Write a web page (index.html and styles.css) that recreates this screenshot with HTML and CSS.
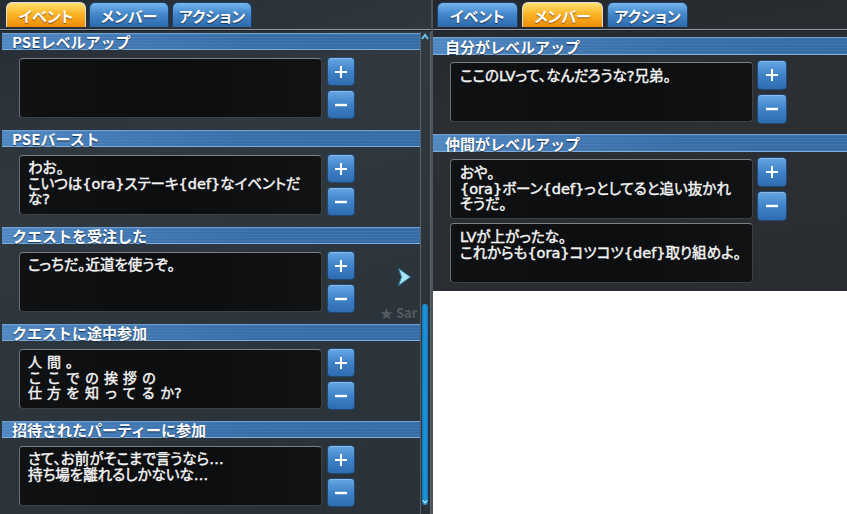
FILE: index.html
```html
<!DOCTYPE html>
<html lang="ja">
<head>
  <meta charset="UTF-8">
  <title>オートワード設定</title>
  <link rel="stylesheet" href="styles.css">
</head>
<body>
  <div class="screen">

    <div class="panel panel-left">
      <div class="tabs">
        <span class="tab tab-on">イベント</span>
        <span class="tab">メンバー</span>
        <span class="tab">アクション</span>
      </div>
      <div class="panel-body">
        <div class="list">
          <section class="entry">
            <h2 class="entry-title">PSEレベルアップ</h2>
            <div class="entry-row">
              <div class="line-box"></div>
              <div class="btns">
                <button class="btn"><svg width="14" height="14" viewBox="0 0 14 14"><path d="M7 1v12M1 7h12" stroke="#fff" stroke-width="2"/></svg></button>
                <button class="btn"><svg width="14" height="14" viewBox="0 0 14 14"><path d="M1 7h12" stroke="#fff" stroke-width="2.4"/></svg></button>
              </div>
            </div>
          </section>

          <section class="entry">
            <h2 class="entry-title">PSEバースト</h2>
            <div class="entry-row">
              <div class="line-box">わお。<br>こいつは{ora}ステーキ{def}なイベントだな?</div>
              <div class="btns">
                <button class="btn"><svg width="14" height="14" viewBox="0 0 14 14"><path d="M7 1v12M1 7h12" stroke="#fff" stroke-width="2"/></svg></button>
                <button class="btn"><svg width="14" height="14" viewBox="0 0 14 14"><path d="M1 7h12" stroke="#fff" stroke-width="2.4"/></svg></button>
              </div>
            </div>
          </section>

          <section class="entry">
            <h2 class="entry-title">クエストを受注した</h2>
            <div class="entry-row">
              <div class="line-box">こっちだ。近道を使うぞ。</div>
              <div class="btns">
                <button class="btn"><svg width="14" height="14" viewBox="0 0 14 14"><path d="M7 1v12M1 7h12" stroke="#fff" stroke-width="2"/></svg></button>
                <button class="btn"><svg width="14" height="14" viewBox="0 0 14 14"><path d="M1 7h12" stroke="#fff" stroke-width="2.4"/></svg></button>
              </div>
            </div>
          </section>

          <section class="entry">
            <h2 class="entry-title">クエストに途中参加</h2>
            <div class="entry-row">
              <div class="line-box line-box-wide">人間。<br>ここでの挨拶の<br>仕方を知ってる<span class="tight">か?</span></div>
              <div class="btns">
                <button class="btn"><svg width="14" height="14" viewBox="0 0 14 14"><path d="M7 1v12M1 7h12" stroke="#fff" stroke-width="2"/></svg></button>
                <button class="btn"><svg width="14" height="14" viewBox="0 0 14 14"><path d="M1 7h12" stroke="#fff" stroke-width="2.4"/></svg></button>
              </div>
            </div>
          </section>

          <section class="entry">
            <h2 class="entry-title">招待されたパーティーに参加</h2>
            <div class="entry-row">
              <div class="line-box">さて、お前がそこまで言うなら…<br>持ち場を離れるしかないな…</div>
              <div class="btns">
                <button class="btn"><svg width="14" height="14" viewBox="0 0 14 14"><path d="M7 1v12M1 7h12" stroke="#fff" stroke-width="2"/></svg></button>
                <button class="btn"><svg width="14" height="14" viewBox="0 0 14 14"><path d="M1 7h12" stroke="#fff" stroke-width="2.4"/></svg></button>
              </div>
            </div>
          </section>
        </div>

        <div class="scroll">
          <svg class="scroll-up" width="8" height="8" viewBox="0 0 8 8"><path d="M1 6L4 2l3 4" fill="none" stroke="#6cc4f0" stroke-width="2"/></svg>
          <div class="scroll-thumb">
            <svg width="7" height="6" viewBox="0 0 7 6"><path d="M1 1l2.5 3L6 1" fill="none" stroke="#bfe6fa" stroke-width="1.4"/></svg>
          </div>
        </div>
      </div>

      <span class="name-tag">★ Sar</span>
      <svg class="cursor" width="15" height="20" viewBox="0 0 15 20"><path d="M1.5 1.5L13.5 10 1.5 18.5 4.5 10z" fill="#a6e4f6" stroke="#2f7fa6" stroke-width="1"/></svg>
    </div>

    <div class="panel panel-right">
      <div class="tabs">
        <span class="tab">イベント</span>
        <span class="tab tab-on">メンバー</span>
        <span class="tab">アクション</span>
      </div>
      <div class="panel-body">
        <div class="list">
          <section class="entry">
            <h2 class="entry-title">自分がレベルアップ</h2>
            <div class="entry-row">
              <div class="boxes">
                <div class="line-box">ここのLVって、なんだろうな?兄弟。</div>
              </div>
              <div class="btns">
                <button class="btn"><svg width="14" height="14" viewBox="0 0 14 14"><path d="M7 1v12M1 7h12" stroke="#fff" stroke-width="2"/></svg></button>
                <button class="btn"><svg width="14" height="14" viewBox="0 0 14 14"><path d="M1 7h12" stroke="#fff" stroke-width="2.4"/></svg></button>
              </div>
            </div>
          </section>

          <section class="entry">
            <h2 class="entry-title">仲間がレベルアップ</h2>
            <div class="entry-row">
              <div class="boxes">
                <div class="line-box">おや。<br>{ora}ボーン{def}っとしてると追い抜かれ<br>そうだ。</div>
                <div class="line-box">LVが上がったな。<br>これからも{ora}コツコツ{def}取り組めよ。</div>
              </div>
              <div class="btns">
                <button class="btn"><svg width="14" height="14" viewBox="0 0 14 14"><path d="M7 1v12M1 7h12" stroke="#fff" stroke-width="2"/></svg></button>
                <button class="btn"><svg width="14" height="14" viewBox="0 0 14 14"><path d="M1 7h12" stroke="#fff" stroke-width="2.4"/></svg></button>
              </div>
            </div>
          </section>
        </div>
      </div>
    </div>

  </div>
</body>
</html>
```

FILE: styles.css
```css
body { margin: 0; background: #fff; font-family: "Noto Sans CJK JP", "Noto Sans", sans-serif; color: #f2f2f2; }
.screen { display: flex; align-items: flex-start; width: 847px; }

.panel { position: relative; box-sizing: border-box; padding-top: 2px; overflow: hidden; }
.panel-left { width: 433px; height: 514px; background: linear-gradient(160deg, #262c33 0%, #303840 30%, #2d353c 60%, #2a3138 100%); border-right: 2px solid #4a545d; }
.panel-right { width: 414px; height: 291px; background: linear-gradient(170deg, #24282d 0%, #2c3035 40%, #292c30 100%); }

.tabs { display: flex; gap: 3px; height: 25px; padding-left: 6px; margin-bottom: 2px; }
.panel-right .tabs { padding-left: 4px; gap: 4px; }
.tab { width: 80px; box-sizing: border-box; border: 1px solid #1c426c; border-bottom: none; border-radius: 6px 6px 0 0; background: linear-gradient(#76b6ec, #4488cc 45%, #2d69ab); font-size: 15px; font-weight: bold; line-height: 25px; text-align: center; color: #fff; text-shadow: 0 1px 1px #1a2f48; font-feature-settings: "palt"; }
.panel-right .tab { width: 81px; }
.tab-on { border-color: #d8dde2; background: linear-gradient(#ffe070, #fbb628 45%, #ee8c06); text-shadow: 0 1px 1px #8a4a00; }

.panel-body { display: flex; border-top: 1px solid #8e99a3; box-shadow: 0 1px 0 #1d2227 inset; }
.list { flex: 1; padding-top: 3px; }
.panel-right .list { padding-top: 7px; }

.entry { margin-bottom: 11px; }
.panel-right .entry { margin-bottom: 10px; }
.entry-title { margin: 0 0 0 2px; height: 17px; box-sizing: border-box; padding-left: 10px; font-size: 15px; font-weight: bold; line-height: 16px; color: #fff; text-shadow: 0 1px 1px #15304f; border-top: 1px solid #6f9fd0; border-bottom: 1px solid #7eaedc; background: repeating-linear-gradient(180deg, rgba(255,255,255,0.06) 0 1px, rgba(0,0,0,0) 1px 3px), linear-gradient(90deg, #5088c2 0%, #4279b4 25%, #386ea8 60%, #366ca6 100%); }
.panel-right .entry-title { margin-left: 0; height: 18px; line-height: 17px; padding-left: 12px; }

.entry-row { display: flex; align-items: flex-start; padding-left: 19px; margin-top: 7px; }
.panel-right .entry-row { padding-left: 17px; margin-top: 5px; }
.boxes { display: flex; flex-direction: column; gap: 4px; margin-top: 2px; }

.line-box { width: 303px; height: 60px; box-sizing: border-box; margin-top: 1px; padding: 5px 8px; background: linear-gradient(90deg, #0f1113, #0b0d0f 50%, #101214); border: 1px solid #3d4146; border-top-color: #7c8084; border-left-color: #6a6e72; border-radius: 4px; font-family: "DejaVu Sans", "Noto Sans CJK JP", sans-serif; font-size: 14.5px; line-height: 15.5px; color: #f4f4f4; -webkit-text-stroke: 0.45px #f4f4f4; font-feature-settings: "palt"; }
.panel-right .line-box { margin-top: 0; padding: 6px 9px; }
.line-box-wide { font-size: 14px; letter-spacing: 5px; font-feature-settings: normal; }
.tight { letter-spacing: 0; }

.btns { display: flex; flex-direction: column; gap: 4px; margin-left: 5px; }
.panel-right .btns { margin-left: 4px; }
.btn { width: 28px; height: 29px; padding: 0; display: flex; align-items: center; justify-content: center; border: 1px solid #1f4a78; border-radius: 4px; background: linear-gradient(#66a6e2, #3f82c8 50%, #2f6cb0); box-shadow: 0 1px 0 rgba(255,255,255,0.25) inset; }
.panel-right .btn { width: 30px; height: 30px; }

.scroll { position: relative; width: 9px; margin-top: 2px; border-left: 1px solid #59636c; border-right: 1px solid #59636c; }
.scroll-up { display: block; margin: 1px 0 0 0; }
.scroll-thumb { position: absolute; left: 1px; top: 272px; width: 6px; height: 201px; border-radius: 3px; background: linear-gradient(90deg, #1478bf, #1f96dc, #1478bf); display: flex; align-items: flex-end; justify-content: center; }

.name-tag { position: absolute; left: 380px; top: 303px; font-size: 13px; font-weight: bold; color: rgba(110,118,126,0.6); }
.cursor { position: absolute; left: 397px; top: 267px; }
```
